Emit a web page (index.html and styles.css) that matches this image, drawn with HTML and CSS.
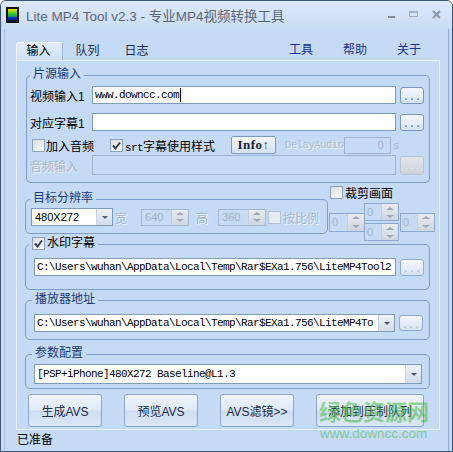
FILE: index.html
```html
<!DOCTYPE html>
<html lang="zh-CN">
<head>
    <meta charset="UTF-8">
    <meta name="viewport" content="width=device-width, initial-scale=1.0">
    <title>Lite MP4 Tool v2.3</title>
    <link rel="stylesheet" href="styles.css">
</head>
<body>

<div class="window">
    <div class="titlebar">
        <svg class="app-icon" width="13" height="16" viewBox="0 0 13 16">
            <defs>
                <linearGradient id="film" x1="0" y1="0" x2="0" y2="1">
                    <stop offset="0" stop-color="#f0e800"/>
                    <stop offset="0.45" stop-color="#33c233"/>
                    <stop offset="0.68" stop-color="#1b9a6a"/>
                    <stop offset="0.72" stop-color="#1236c0"/>
                    <stop offset="1" stop-color="#0b1d8e"/>
                </linearGradient>
            </defs>
            <rect width="13" height="16" fill="#121212"/>
            <rect x="2" y="2" width="9" height="11" fill="url(#film)"/>
        </svg>
        <span class="title">Lite MP4 Tool v2.3 - 专业MP4视频转换工具</span>
        <svg class="caption-btns" width="64" height="14" viewBox="0 0 64 14">
            <rect x="4" y="8" width="7" height="2" fill="#7f8ea3"/>
            <rect x="25.5" y="3.5" width="8" height="5" fill="none" stroke="#a4b1c2"/>
            <rect x="25" y="3" width="9" height="2" fill="#a4b1c2"/>
            <path d="M49 3 L56 10 M56 3 L49 10" stroke="#8a98ab" stroke-width="2"/>
        </svg>
    </div>

    <div class="client">
        <div class="tabbar">
            <span class="tab active">输入</span>
            <span class="tab">队列</span>
            <span class="tab">日志</span>
            <div class="menu">
                <span>工具</span>
                <span>帮助</span>
                <span>关于</span>
            </div>
        </div>

        <div class="page">
            <!-- source input -->
            <section class="group source">
                <div class="legend">片源输入</div>
                <div class="row r1">
                    <span class="label">视频输入1</span>
                    <div class="field mono">www.downcc.com<span class="caret"></span></div>
                    <button class="browse">...</button>
                </div>
                <div class="row r2">
                    <span class="label">对应字幕1</span>
                    <div class="field"></div>
                    <button class="browse">...</button>
                </div>
                <div class="row opts">
                    <span class="check first"></span>
                    <span class="check-text">加入音频</span>
                    <span class="check checked srt"><svg viewBox="0 0 11 11"><path d="M2 5.5 L4.5 8.5 L9 2.5"/></svg></span>
                    <span class="check-text"><span class="mono">srt</span>字幕使用样式</span>
                    <button class="info">Info↑</button>
                    <span class="delay mono">DelayAudio</span>
                    <div class="field disabled delay-field">0</div>
                    <span class="unit">s</span>
                </div>
                <div class="row r4">
                    <span class="label dim">音频输入</span>
                    <div class="field disabled"></div>
                    <button class="browse off">...</button>
                </div>
            </section>

            <!-- resolution + crop -->
            <div class="res-row">
                <section class="group res">
                    <div class="legend">目标分辨率</div>
                    <div class="row">
                        <div class="combo size">
                            <span class="combo-text">480X272</span>
                            <span class="drop"></span>
                        </div>
                        <span class="dim w-label">宽</span>
                        <div class="spin wide-spin">
                            <span class="spin-val">640</span>
                            <span class="arrows"><i class="up"></i><i class="down"></i></span>
                        </div>
                        <span class="dim h-label">高</span>
                        <div class="spin wide-spin h-spin">
                            <span class="spin-val">360</span>
                            <span class="arrows"><i class="up"></i><i class="down"></i></span>
                        </div>
                        <span class="check off ratio"></span>
                        <span class="dim ratio-text">按比例</span>
                    </div>
                </section>
                <div class="crop">
                    <div class="crop-head">
                        <span class="check"></span>
                        <span class="crop-text">裁剪画面</span>
                    </div>
                    <div class="crop-spins">
                        <div class="spin small left">
                            <span class="spin-val">0</span>
                            <span class="arrows"><i class="up"></i><i class="down"></i></span>
                        </div>
                        <div class="crop-mid">
                            <div class="spin small">
                                <span class="spin-val">0</span>
                                <span class="arrows"><i class="up"></i><i class="down"></i></span>
                            </div>
                            <div class="spin small">
                                <span class="spin-val">0</span>
                                <span class="arrows"><i class="up"></i><i class="down"></i></span>
                            </div>
                        </div>
                        <div class="spin small right">
                            <span class="spin-val">0</span>
                            <span class="arrows"><i class="up"></i><i class="down"></i></span>
                        </div>
                    </div>
                </div>
            </div>

            <!-- watermark subtitle -->
            <section class="group mark">
                <div class="legend plain">
                    <span class="check checked"><svg viewBox="0 0 11 11"><path d="M2 5.5 L4.5 8.5 L9 2.5"/></svg></span>
                    水印字幕
                </div>
                <div class="row path-row">
                    <div class="field mono">C:\Users\wuhan\AppData\Local\Temp\Rar$EXa1.756\LiteMP4Tool2</div>
                    <button class="browse faint">...</button>
                </div>
            </section>

            <!-- player path -->
            <section class="group player">
                <div class="legend">播放器地址</div>
                <div class="row path-row">
                    <div class="combo">
                        <span class="combo-text mono">C:\Users\wuhan\AppData\Local\Temp\Rar$EXa1.756\LiteMP4To</span>
                        <span class="drop"></span>
                    </div>
                    <button class="browse faint">...</button>
                </div>
            </section>

            <!-- preset -->
            <section class="group preset">
                <div class="legend">参数配置</div>
                <div class="row path-row">
                    <div class="combo tall">
                        <span class="combo-text mono">[PSP+iPhone]480X272 Baseline@L1.3</span>
                        <span class="drop"></span>
                    </div>
                </div>
            </section>

            <div class="actions">
                <button class="btn">生成AVS</button>
                <button class="btn">预览AVS</button>
                <button class="btn">AVS滤镜&gt;&gt;</button>
                <button class="btn wide">添加到压制队列</button>
            </div>
        </div>

        <div class="status">已准备</div>
    </div>

    <div class="watermark">
        <div class="wm-big">绿色资源网</div>
        <div class="wm-url">www.downcc.com</div>
    </div>
</div>

</body>
</html>
```

FILE: styles.css
```css
* {
    box-sizing: border-box;
}

body {
    margin: 0;
    font-family: "Liberation Sans", "Noto Sans CJK SC", sans-serif;
    font-size: 12px;
    color: #000;
    background: #fff;
}

.mono {
    font-family: "Liberation Mono", "Noto Sans CJK SC", monospace;
    font-size: 11px;
    letter-spacing: -0.6px;
}

button {
    font-family: inherit;
    font-size: 12px;
    padding: 0;
    margin: 0;
    cursor: pointer;
}

/* window frame */
.window {
    position: relative;
    width: 453px;
    height: 452px;
    border: 1px solid #3e5574;
    border-radius: 6px 6px 0 0;
    background: #c5daf5;
    display: flex;
    flex-direction: column;
    overflow: hidden;
}

.titlebar {
    height: 28px;
    flex: none;
    display: flex;
    align-items: center;
    padding-left: 5px;
    background: linear-gradient(#dce9fa, #c9dcf5);
}

.app-icon {
    margin-right: 7px;
}

.title {
    font-size: 13.5px;
    color: #5b687b;
    white-space: nowrap;
}

.caption-btns {
    margin-left: auto;
    margin-right: 4px;
}

.client {
    flex: 1;
    margin: 0 3px;
    border-left: 1px solid #a9c1e2;
    border-right: 1px solid #8ea9d0;
    display: flex;
    flex-direction: column;
}

/* tabs */
.tabbar {
    margin-top: 13px;
    height: 18px;
    display: flex;
    padding-left: 9px;
    padding-right: 27px;
}

.tab {
    width: 49px;
    line-height: 18px;
    text-align: center;
    color: #1b2c52;
}

.tab.active {
    position: relative;
    z-index: 1;
    width: 47px;
    height: 19px;
    margin-left: 2px;
    padding-right: 2px;
    color: #000;
    background: linear-gradient(#e2ecfa, #cfe0f6);
    border: 1px solid #9db5d8;
    border-color: #f3f7fd #9cb4d7 transparent #f3f7fd;
    border-radius: 3px 3px 0 0;
    line-height: 17px;
}

.menu {
    margin-left: auto;
    display: flex;
    gap: 30px;
    line-height: 16px;
    color: #17318c;
}

.page {
    margin: 0 8px 0 11px;
    border: 1px solid #e8f0fa;
    border-top-color: #eaf1fb;
    padding: 0 9px 2px 8px;
}

/* group boxes */
.group {
    border: 1px solid #7f9dc8;
    border-radius: 5px;
}

.legend {
    display: flex;
    width: max-content;
    align-items: center;
    height: 14px;
    margin: -9px 0 0 3px;
    padding: 0 3px;
    background: #c5daf5;
    color: #1d3b7b;
    line-height: 14px;
}

.legend.plain {
    color: #000;
}

.legend .check {
    margin-right: 2px;
}

.row {
    display: flex;
    align-items: center;
}

.row > * {
    flex-shrink: 0;
}

.source {
    margin: 14px 0 0 1px;
    padding: 0 5px 7px 0;
}

.source .row {
    padding-left: 3px;
}

.source .r1 {
    margin-top: 5px;
    height: 18px;
}

.source .r2 {
    margin-top: 9px;
    height: 18px;
}

.source .opts {
    margin-top: 5px;
    height: 18px;
}

.source .r4 {
    margin-top: 1px;
    height: 20px;
}

.label {
    width: 62px;
    white-space: nowrap;
}

.dim {
    color: #a7b8cf;
    text-shadow: 1px 1px 0 #eaf1fb;
}

.field {
    flex: 1 1 0;
    min-width: 0;
    height: 18px;
    border: 1px solid #7f9db9;
    background: #fff;
    display: flex;
    align-items: center;
    padding-left: 2px;
    white-space: nowrap;
    overflow: hidden;
}

.r4 .field {
    height: 20px;
}

.field.disabled {
    background: #c5daf5;
    border-color: #9db4d6;
}

.caret {
    width: 1px;
    height: 14px;
    background: #000;
    margin-left: 1px;
}

.browse {
    width: 24px;
    height: 17px;
    margin-left: 4px;
    border: 1px solid #7b98c3;
    border-radius: 3px;
    background: linear-gradient(#f6f9fd, #d4e1f3);
    color: #4f6688;
    font-family: "Liberation Mono", monospace;
    font-size: 10px;
    line-height: 19px;
    letter-spacing: 0;
}

.browse.faint {
    color: #b0bccc;
    border-color: #91acd2;
}

.browse.off {
    height: 19px;
    border-color: #b8c5d6;
    background: linear-gradient(#e1e5ea, #ccd3dc);
    color: #e3e8ee;
}

/* checkboxes */
.check {
    flex: none;
    width: 13px;
    height: 13px;
    border: 1px solid #8fa4bf;
    background: linear-gradient(135deg, #d9dde3, #fbfbfc);
    display: inline-block;
}

.check svg {
    display: block;
    width: 11px;
    height: 11px;
}

.check path {
    fill: none;
    stroke: #34435a;
    stroke-width: 2;
}

.check.off {
    border-color: #b3c2d5;
    background: #e4ebf4;
}

.check.first {
    margin-left: 2px;
}

.check-text {
    margin-left: 1px;
    white-space: nowrap;
}

.check.srt {
    margin-left: 16px;
}

.srt + .check-text {
    margin-left: 2px;
}

.info {
    width: 45px;
    height: 18px;
    margin-left: 16px;
    border: 1px solid #7d99c4;
    border-radius: 2px;
    background: linear-gradient(#f5f8fd, #d3e0f2);
    font-family: "Liberation Serif", serif;
    font-weight: bold;
    font-size: 13px;
    color: #1b2333;
    letter-spacing: 0.5px;
}

.delay {
    margin-left: 9px;
    font-size: 10.5px;
    letter-spacing: -0.45px;
    color: #aebfd4;
    text-shadow: 1px 1px 0 #e8f0fa;
    white-space: nowrap;
}

.delay-field {
    flex: none;
    width: 47px;
    height: 17px;
    justify-content: flex-end;
    padding-right: 6px;
    color: #a5b5ca;
    font-size: 11px;
}

.unit {
    margin-left: 3px;
    color: #a7b8cf;
    font-size: 11px;
}

/* resolution row */
.res-row {
    margin-top: 3px;
    display: flex;
    align-items: flex-start;
}

.res {
    width: 303px;
    flex: none;
    margin-top: 13px;
    padding-bottom: 7px;
}

.res .legend {
    margin-left: 4px;
}

.res .row {
    margin-top: 3px;
    padding-left: 5px;
    height: 18px;
}

.combo {
    flex: 1 1 0;
    min-width: 0;
    height: 18px;
    border: 1px solid #7f9db9;
    background: #fff;
    display: flex;
    align-items: stretch;
    overflow: hidden;
}

.combo.size {
    flex: none;
    width: 82px;
}

.combo.tall {
    height: 20px;
}

.combo-text {
    flex: 1;
    display: flex;
    align-items: center;
    padding-left: 2px;
    white-space: nowrap;
    overflow: hidden;
}

.size .combo-text {
    padding-left: 3px;
    font-size: 11px;
}

.drop {
    flex: none;
    width: 16px;
    background: linear-gradient(#eef2f8, #d3dcea);
    border-left: 1px solid #c7d3e3;
    display: flex;
    align-items: center;
    justify-content: center;
}

.drop::before {
    content: "";
    border-left: 3px solid transparent;
    border-right: 3px solid transparent;
    border-top: 3px solid #4c5b72;
}

.w-label {
    margin-left: 2px;
}

.spin {
    flex: none;
    display: flex;
    height: 17px;
    border: 1px solid #a3b9d8;
    background: #c7dbf5;
}

.wide-spin {
    width: 48px;
    margin-left: 14px;
}

.h-label {
    margin-left: 7px;
}

.h-spin {
    margin-left: 10px;
}

.spin-val {
    flex: 1;
    padding-left: 3px;
    color: #a4b5cb;
    font-size: 11px;
    line-height: 15px;
}

.arrows {
    width: 17px;
    display: flex;
    flex-direction: column;
    background: linear-gradient(#e8ebf0, #cfd6e0);
    border-left: 1px solid #c6d0dd;
}

.arrows i {
    flex: 1;
    display: flex;
    align-items: center;
    justify-content: center;
}

.arrows i::before {
    content: "";
    border-left: 4px solid transparent;
    border-right: 4px solid transparent;
}

.arrows .up::before {
    border-bottom: 3px solid #9ba9bb;
}

.arrows .down::before {
    border-top: 3px solid #9ba9bb;
}

.ratio {
    margin-left: 2px;
}

.ratio-text {
    margin-left: 2px;
}

/* crop */
.crop {
    margin-left: 1px;
}

.crop-head {
    height: 13px;
    display: flex;
    align-items: center;
    padding-left: 1px;
}

.crop-text {
    margin-left: 2px;
}

.crop-spins {
    margin-top: 4px;
    display: flex;
    align-items: center;
}

.spin.small {
    width: 35px;
    height: 18px;
    border-color: #8ea9cf;
}

.spin.small.left {
    width: 36px;
    height: 19px;
}

.spin.small .spin-val {
    line-height: 16px;
    padding-left: 2px;
}

.crop-mid {
    display: flex;
    flex-direction: column;
    gap: 2px;
    margin-left: -1px;
}

.spin.small.right {
    height: 19px;
    margin-left: 1px;
}

/* path groups */
.mark {
    margin-top: 3px;
    padding: 0 5px 13px 0;
}

.mark .legend {
    margin-left: 3px;
}

.path-row {
    padding-left: 8px;
    margin-top: 8px;
}

.mark .field {
    height: 18px;
}

.player {
    margin-top: 10px;
    padding: 0 6px 7px 0;
}

.player .legend,
.preset .legend {
    margin-left: 6px;
}

.player .browse {
    height: 16px;
}

.preset {
    margin-top: 14px;
    padding: 0 7px 4px 0;
}

.preset .path-row {
    margin-top: 4px;
}

/* buttons */
.actions {
    margin-top: 5px;
    padding-left: 3px;
    display: flex;
    gap: 22px;
}

.btn {
    width: 74px;
    height: 33px;
    border: 1px solid #8ca6ca;
    border-radius: 3px;
    background: linear-gradient(#eef4fc 0%, #e0eaf8 48%, #cfdef2 52%, #d9e6f6 100%);
    color: #1c2b49;
}

.btn.wide {
    width: 108px;
}

.status {
    flex: 1;
    padding-left: 12px;
    line-height: 20px;
}

/* site watermark laid over the screenshot */
.watermark {
    position: absolute;
    left: 318px;
    top: 398px;
    color: rgba(70, 185, 70, 0.55);
    pointer-events: none;
}

.wm-big {
    font-size: 22px;
    font-weight: bold;
    line-height: 28px;
}

.wm-url {
    font-size: 13.5px;
    line-height: 14px;
    margin-left: 1px;
}
```
